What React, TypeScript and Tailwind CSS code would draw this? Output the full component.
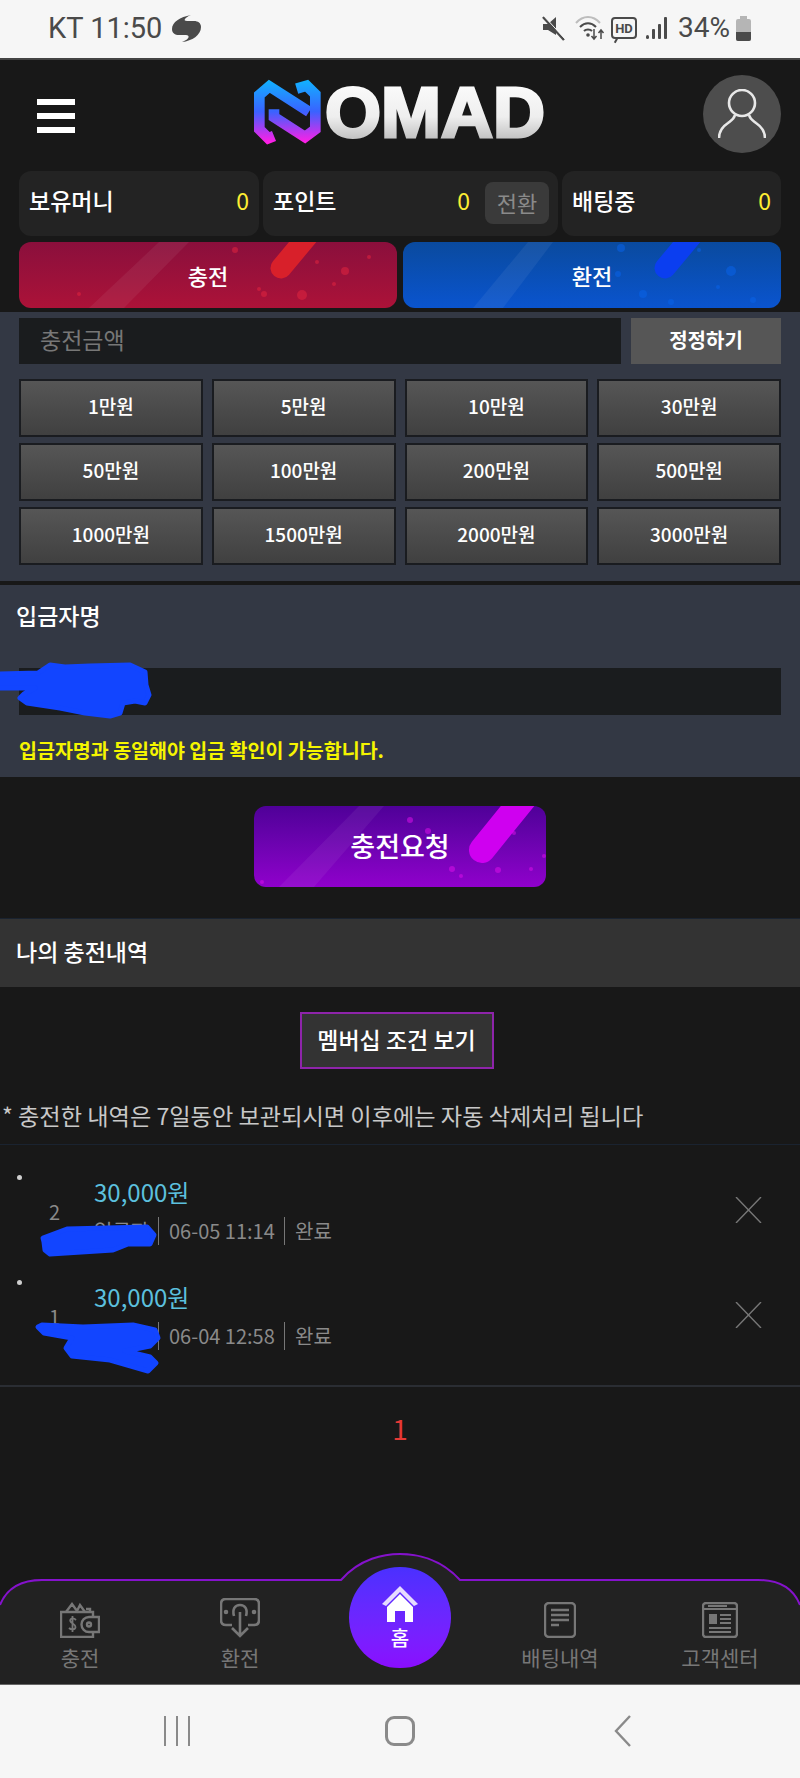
import React from "react";

const AMOUNTS = [
  "1만원", "5만원", "10만원", "30만원",
  "50만원", "100만원", "200만원", "500만원",
  "1000만원", "1500만원", "2000만원", "3000만원",
];

type Dot = [number, number, number];

const Sparkle = ({
  w,
  h,
  band,
  streak,
  streakWidth,
  streakColor,
  dotColor,
  dots,
}: {
  w: number;
  h: number;
  band: string;
  streak: string;
  streakWidth: number;
  streakColor: string;
  dotColor: string;
  dots: Dot[];
}) => (
  <svg className="absolute inset-0" width={w} height={h} viewBox={`0 0 ${w} ${h}`}>
    <path d={band} fill="#ffffff" fillOpacity={0.06} />
    <path d={streak} stroke={streakColor} strokeWidth={streakWidth} strokeLinecap="round" />
    {dots.map(([x, y, r], i) => (
      <circle key={i} cx={x} cy={y} r={r} fill={dotColor} fillOpacity={0.55} />
    ))}
  </svg>
);

const redDots: Dot[] = [[216, 8, 3], [298, 20, 2], [326, 29, 4], [245, 52, 3], [283, 53, 5], [240, 47, 2], [315, 42, 2], [350, 15, 2], [60, 52, 2]];
const blueDots: Dot[] = [[218, 6, 4], [296, 8, 2], [328, 29, 5], [215, 32, 3], [240, 52, 4], [268, 60, 3], [315, 45, 2], [350, 58, 3]];
const purpleDots: Dot[] = [[156, 14, 3], [174, 25, 3], [260, 27, 2], [290, 50, 2], [198, 63, 3], [207, 70, 2], [244, 64, 3], [277, 63, 2], [8, 76, 2]];

const StatCard = ({ label, className, children }: { label: string; className: string; children?: React.ReactNode }) => (
  <div className={`flex h-[65px] items-center rounded-xl bg-[#232323] pb-[6px] ${className}`}>
    <span className="text-[23px] font-medium text-white">{label}</span>
    {children}
  </div>
);

const Scribble = ({ className, viewBox, width, height, d }: { className: string; viewBox: string; width: number; height: number; d: string }) => (
  <svg className={`absolute ${className}`} width={width} height={height} viewBox={viewBox}>
    <path d={d} fill="#1245ff" stroke="#1245ff" strokeWidth={5} strokeLinejoin="round" />
  </svg>
);

const HistoryRow = ({
  no,
  date,
  scribble,
}: {
  no: number;
  date: string;
  scribble: React.ReactNode;
}) => (
  <li className="relative flex h-[105px] items-start">
    <span className="ml-[17px] mt-[5px] h-[5px] w-[5px] rounded-full bg-[#cfcfcf]" />
    <span className="ml-[27px] mt-[28px] w-[45px] text-[20px] leading-[28px] text-[#8a8a8a]">{no}</span>
    <div className="flex flex-col">
      <span className="mt-[5px] text-[24px] leading-[34px] text-[#5cc0de]">30,000원</span>
      <div className="mt-[8px] flex h-[28px] items-center text-[20px] text-[#8a8a8a]">
        <span className="w-[64px]">입금자</span>
        <span className="h-[28px] w-px bg-[#777]" />
        <span className="ml-[10px] w-[115px] whitespace-nowrap">{date}</span>
        <span className="h-[28px] w-px bg-[#777]" />
        <span className="ml-[10px]">완료</span>
      </div>
    </div>
    <svg className="absolute left-[735px] top-[27px]" width={27} height={26} viewBox="0 0 27 26">
      <path d="M1 0 26 26M26 0 1 26" stroke="#777" strokeWidth={1.4} />
    </svg>
    {scribble}
  </li>
);

const Logo = () => (
  <svg width={294} height={84} viewBox="0 -10 294 84">
    <defs>
      <linearGradient id="logoN" gradientUnits="userSpaceOnUse" x1="0" y1="0" x2="0" y2="184">
        <stop offset="0" stopColor="#12b0ff" />
        <stop offset="0.5" stopColor="#3a62ff" />
        <stop offset="1" stopColor="#ff1fe6" />
      </linearGradient>
      <linearGradient id="logoText" x1="0" y1="0" x2="0" y2="1">
        <stop offset="0" stopColor="#ffffff" />
        <stop offset="0.55" stopColor="#eeeeee" />
        <stop offset="1" stopColor="#a8a8a8" />
      </linearGradient>
    </defs>
    <g transform="scale(0.3333)">
      <g fill="none" stroke="url(#logoN)" strokeWidth={32} strokeLinejoin="miter">
        <path d="M60 165 43 172 16 145V42L46 16 165 92" />
        <path d="M128 23 158 14 184 40V145L153 168 60 108V85" />
      </g>
    </g>
    <text
      x={71}
      y={56}
      textLength={220}
      lengthAdjust="spacingAndGlyphs"
      fontFamily="'Liberation Sans', sans-serif"
      fontWeight={700}
      fontSize={70}
      fill="url(#logoText)"
      stroke="url(#logoText)"
      strokeWidth={3}
    >
      OMAD
    </text>
  </svg>
);

const WalletIcon = () => (
  <svg width={40} height={36} viewBox="0 0 40 36" fill="none" stroke="#777" strokeWidth={2.4}>
    <path d="M1 10H33V35H1Z" />
    <path d="M6 10 12 2 17 9 20 3 25 10M30 10V7H26" />
    <path d="M29 15H39V30H29A7 7 0 0 1 29 15Z" fill="#222" />
    <circle cx={29} cy={22.5} r={2} />
    <path d="M16 18C13 15 9 17 10.500 19.500C12 22 15.500 22 15.500 25C15.500 28 11 28 9 26M12.500 14V30" strokeWidth={1.8} />
  </svg>
);

const ExchangeIcon = () => (
  <svg width={40} height={40} viewBox="0 0 40 40" fill="none" stroke="#777" strokeWidth={2.6}>
    <path d="M12 27H6Q1 27 1 22V6Q1 1 6 1H34Q39 1 39 6V22Q39 27 34 27H28" />
    <path d="M14 18C12 11 15 7 20 7C25 7 28 11 26 18" />
    <path d="M20 14V37M12 30 20 38 28 30" />
    <circle cx={6} cy={14} r={1} fill="#777" />
    <circle cx={34} cy={14} r={1} fill="#777" />
  </svg>
);

const DocIcon = () => (
  <svg width={32} height={36} viewBox="0 0 32 36" fill="none" stroke="#777" strokeWidth={2.4}>
    <rect x={1} y={1} width={30} height={34} rx={4} />
    <path d="M7 8H25M7 13H25M7 18H25M7 23H15" />
  </svg>
);

const NewsIcon = () => (
  <svg width={36} height={36} viewBox="0 0 36 36" fill="none" stroke="#777" strokeWidth={2.4}>
    <rect x={1} y={1} width={34} height={34} rx={3} />
    <path d="M1 7H35M6 4H25" strokeWidth={1.8} />
    <rect x={7} y={12} width={8} height={10} fill="#777" stroke="none" />
    <path d="M18 13H29M18 17H29M18 21H29M7 26H29M7 30H29" strokeWidth={1.8} />
  </svg>
);

const HomeIcon = () => (
  <svg width={38} height={38} viewBox="0 0 38 38">
    <path d="M1 19 19 1 37 19 33 21 19 7 5 21Z" fill="#e6dcff" />
    <path d="M6 22 19 9 32 22V37H24V26H14V37H6Z" fill="#ffffff" />
  </svg>
);

const StatusIcons = () => (
  <div className="flex items-center">
    <svg className="mr-[9px]" width={24} height={26} viewBox="0 0 24 26">
      <path d="M1 9H6L14 2V20L6 15H1Z" fill="#4a4a4a" />
      <path d="M1 2 22 25" stroke="#4a4a4a" strokeWidth={2.5} />
      <path d="M1 0 24 25" stroke="#f6f6f6" strokeWidth={1} />
    </svg>
    <svg className="mr-[5px]" width={31} height={26} viewBox="0 0 31 26" fill="none">
      <path d="M1 8C8 0 18 0 25 8" stroke="#bdbdbd" strokeWidth={2} />
      <path d="M5 12C10 7 16 7 21 12M9 16C11 14 15 14 17 16" stroke="#4a4a4a" strokeWidth={2} />
      <circle cx={13} cy={20} r={1.800} fill="#4a4a4a" />
      <path d="M19 14V24M16.500 21 19 24 21.500 21" stroke="#4a4a4a" strokeWidth={1.5} />
      <path d="M26 24V15M23.500 18 26 15 28.500 18" stroke="#4a4a4a" strokeWidth={1.5} />
    </svg>
    <div className="relative mr-[9px] flex h-[22px] w-[26px] items-center justify-center rounded-[4px] border-2 border-[#4a4a4a] text-[13px] font-bold leading-none text-[#4a4a4a]">
      HD
      <span className="absolute bottom-[-6px] left-[2px] h-[5px] w-[2px] rotate-[30deg] bg-[#4a4a4a]" />
    </div>
    <svg className="mr-[11px]" width={21} height={24} viewBox="0 0 21 24" fill="#4a4a4a">
      <rect x={0} y={19} width={3} height={4} rx={1.500} />
      <rect x={6} y={13} width={3} height={10} rx={1} />
      <rect x={12} y={8} width={3} height={15} rx={1} />
      <rect x={18} y={1} width={3} height={22} rx={1} />
    </svg>
    <span className="mr-[6px] text-[28px] leading-none text-[#4a4a4a]">34%</span>
    <svg width={15} height={25} viewBox="0 0 15 25">
      <path d="M4 0H11V3H13Q15 3 15 5V23Q15 25 13 25H2Q0 25 0 23V5Q0 3 2 3H4Z" fill="#b5b5b5" />
      <path d="M0 16H15V23Q15 25 13 25H2Q0 25 0 23Z" fill="#4a4a4a" />
    </svg>
  </div>
);

export default function App() {
  return (
    <div className="flex h-[1778px] w-[800px] flex-col overflow-hidden bg-[#181818] font-['Noto_Sans_CJK_KR','Noto_Sans',sans-serif]">
      {/* Status bar */}
      <div className="flex h-[60px] items-center justify-between border-b-2 border-[#444] bg-[#f6f6f6] pb-[2px] pl-[48px] pr-[49px] font-['Roboto',sans-serif]">
        <div className="flex items-center">
          <span className="text-[29px] leading-none text-[#4a4a4a]">KT 11:50</span>
          <svg className="ml-[10px]" width={29} height={27} viewBox="0 0 29 27">
            <path d="M19 0C8 2 0 7 0 14C0 18 3 20 7 20H14C18 20 18 24 10 27C20 26 29 20 29 12C29 8 26 6 22 6H15C11 6 12 3 19 0Z" fill="#4a4a4a" />
          </svg>
        </div>
        <StatusIcons />
      </div>

      {/* Header */}
      <header className="flex h-[111px] items-center justify-between pl-[37px] pr-[19px]">
        <div className="flex w-[38px] flex-col gap-[8px]">
          <span className="h-[6px] bg-white" />
          <span className="h-[6px] bg-white" />
          <span className="h-[6px] bg-white" />
        </div>
        <div className="ml-[24px] mt-[-5px]">
          <Logo />
        </div>
        <div className="mt-[-4px] flex h-[78px] w-[78px] items-center justify-center rounded-full bg-[#4d4d4d]">
          <svg width={48} height={50} viewBox="0 0 48 50" fill="none" stroke="#e8e8e8" strokeWidth={2.6}>
            <ellipse cx={24} cy={14} rx={13} ry={13} />
            <path d="M17 26C16 30 14 31 10 34C4 38 1 42 1 49M31 26C32 30 34 31 38 34C44 38 47 42 47 49" />
          </svg>
        </div>
      </header>

      {/* Balances */}
      <div className="flex gap-[4px] px-[19px]">
        <StatCard label="보유머니" className="w-[240px] justify-between pl-[10px] pr-[10px]">
          <span className="text-[23px] text-[#ffee33]">0</span>
        </StatCard>
        <StatCard label="포인트" className="w-[295px] pl-[10px] pr-[9px]">
          <span className="ml-auto text-[23px] text-[#ffee33]">0</span>
          <span className="ml-[15px] mt-[4px] flex h-[42px] w-[64px] items-center justify-center rounded-lg bg-[#3a3a3a] text-[22px] text-[#8a8a8a]">전환</span>
        </StatCard>
        <StatCard label="배팅중" className="w-[219px] justify-between pl-[10px] pr-[10px]">
          <span className="text-[23px] text-[#ffee33]">0</span>
        </StatCard>
      </div>

      {/* Deposit / withdraw */}
      <div className="mt-[6px] flex gap-[6px] px-[19px]">
        <button className="relative h-[66px] w-[378px] overflow-hidden rounded-xl bg-gradient-to-b from-[#8a0f3c] to-[#ac1238]">
          <Sparkle
            w={378}
            h={66}
            band="M170 0H140L70 66H105Z"
            streak="M292 -10 262 26"
            streakWidth={21}
            streakColor="#d8202a"
            dotColor="#e02440"
            dots={redDots}
          />
          <span className="relative text-[22px] font-medium text-white">충전</span>
        </button>
        <button className="relative h-[66px] w-[378px] overflow-hidden rounded-xl bg-gradient-to-b from-[#0a4a9e] to-[#0a54cf]">
          <Sparkle
            w={378}
            h={66}
            band="M150 0H125L70 66H100Z"
            streak="M292 -10 262 26"
            streakWidth={21}
            streakColor="#0b3ef0"
            dotColor="#0a62e8"
            dots={blueDots}
          />
          <span className="relative text-[22px] font-medium text-white">환전</span>
        </button>
      </div>

      {/* Amount */}
      <section className="mt-[4px] h-[269px] bg-[#333844] px-[19px] pt-[6px]">
        <div className="flex gap-[10px]">
          <input
            readOnly
            placeholder="충전금액"
            className="h-[46px] w-[602px] bg-[#1a1c1e] pb-[4px] pl-[21px] text-[23px] placeholder:text-[#777]"
          />
          <button className="h-[46px] w-[150px] bg-[#565656] pb-[2px] text-[20px] font-bold text-white">정정하기</button>
        </div>
        <div className="mt-[15px] grid grid-cols-4 gap-x-[9px] gap-y-[6px]">
          {AMOUNTS.map((a) => (
            <button
              key={a}
              className="h-[58px] border-2 border-[#1a1c20] bg-gradient-to-b from-[#565656] to-[#404040] pb-[4px] text-[19px] font-medium text-white"
            >
              {a}
            </button>
          ))}
        </div>
      </section>

      {/* Depositor */}
      <section className="mt-[4px] h-[192px] bg-[#333844]">
        <h2 className="pl-[16px] pt-[14px] text-[23px] font-medium leading-[32px] text-white">입금자명</h2>
        <div className="relative mx-[19px] mt-[37px] h-[47px] bg-[#1a1c1e]">
          <Scribble
            className="left-[-19px] top-[-6px]"
            width={156}
            height={59}
            viewBox="0 662 156 59"
            d="M-3 674 38 673 50 665 65 667 90 666 130 665 145 672 146 685 149 695 145 703 135 701 123 703 120 713 110 716 85 713 60 708 27 703 20 698 24 694 35 688 -3 688Z"
          />
        </div>
        <p className="ml-[19px] mt-[21px] whitespace-nowrap text-[19.5px] font-bold leading-[28px] text-[#f5f500]">입금자명과 동일해야 입금 확인이 가능합니다.</p>
      </section>

      {/* Submit */}
      <div className="flex justify-center pt-[29px]">
        <button className="relative h-[81px] w-[292px] overflow-hidden rounded-xl bg-gradient-to-b from-[#4f0098] to-[#9000cc]">
          <Sparkle
            w={292}
            h={81}
            band="M130 0H105L25 81H60Z"
            streak="M270 -8 228 44"
            streakWidth={26}
            streakColor="#cf00f0"
            dotColor="#d810e8"
            dots={purpleDots}
          />
          <span className="relative text-[27px] font-medium text-white">충전요청</span>
        </button>
      </div>

      {/* History */}
      <h2 className="mt-[31px] flex h-[69px] items-center border-t border-[#1a2330] bg-[#333] pb-[3px] pl-[16px] text-[23px] font-medium text-white">나의 충전내역</h2>
      <div className="flex justify-center pr-[7px] pt-[25px]">
        <button className="h-[57px] w-[194px] border-2 border-[#8e24aa] bg-[#333] pb-[2px] text-[23px] font-medium text-white">멤버십 조건 보기</button>
      </div>
      <p className="ml-[2px] mt-[26px] h-[49px] whitespace-nowrap text-[23.2px] leading-[40px] text-[#c8c8c8]">* 충전한 내역은 7일동안 보관되시면 이후에는 자동 삭제처리 됩니다</p>
      <ul className="border-t border-[#1a2330] pb-[5px] pt-[25px]">
        <HistoryRow
          no={2}
          date="06-05 11:14"
          scribble={
            <Scribble
              className="left-[36px] top-[50px]"
              width={128}
              height={40}
              viewBox="36 1220 128 40"
              d="M43 1238 67 1229 147 1227 154 1235 150 1244 128 1244 113 1250 50 1254 45 1250 44 1242Z"
            />
          }
        />
        <HistoryRow
          no={1}
          date="06-04 12:58"
          scribble={
            <Scribble
              className="left-[30px] top-[43px]"
              width={135}
              height={60}
              viewBox="30 1318 135 60"
              d="M38 1327 42 1325 83 1327 133 1325 155 1330 158 1338 150 1346 125 1351 150 1357 156 1363 148 1371 110 1360 72 1356 66 1348 72 1338 44 1333Z"
            />
          }
        />
      </ul>
      <div className="flex h-[79px] items-center justify-center border-t-2 border-[#2a2d33] pt-[4px] text-[28px] text-[#e53935]">1</div>

      {/* Bottom nav */}
      <nav className="relative mt-auto grid h-[131px] grid-cols-5">
        <svg className="absolute inset-0" width={800} height={131} viewBox="0 0 800 131">
          <path
            d="M0 52Q10 27 42 27H341C360 5 385 1 400 1C415 1 440 5 460 27H758Q790 27 800 52V131H0Z"
            fill="#222222"
          />
          <path
            d="M0 52Q10 27 42 27H341C360 5 385 1 400 1C415 1 440 5 460 27H758Q790 27 800 52"
            fill="none"
            stroke="#8512cc"
            strokeWidth={2}
          />
        </svg>
        {[
          { label: "충전", icon: <WalletIcon /> },
          { label: "환전", icon: <ExchangeIcon /> },
        ].map((item) => (
          <div key={item.label} className="relative flex flex-col items-center pt-[49px]">
            <div className="flex h-[36px] items-end">{item.icon}</div>
            <span className="mt-[4px] text-[21px] leading-[30px] text-[#777]">{item.label}</span>
          </div>
        ))}
        <div className="relative flex flex-col items-center pt-[14px]">
          <div className="flex h-[101px] w-[102px] flex-col items-center rounded-full bg-gradient-to-b from-[#4a30ff] to-[#8a0cff] pt-[18px]">
            <HomeIcon />
            <span className="mt-[1px] text-[20px] font-medium leading-[28px] text-white">홈</span>
          </div>
        </div>
        {[
          { label: "배팅내역", icon: <DocIcon /> },
          { label: "고객센터", icon: <NewsIcon /> },
        ].map((item) => (
          <div key={item.label} className="relative flex flex-col items-center pt-[49px]">
            <div className="flex h-[36px] items-end">{item.icon}</div>
            <span className="mt-[4px] text-[21px] leading-[30px] text-[#777]">{item.label}</span>
          </div>
        ))}
      </nav>

      {/* Android nav */}
      <div className="grid h-[94px] grid-cols-3 border-t border-[#666] bg-[#f6f6f6] px-[65px]">
        <div className="flex items-center justify-center gap-[10px] pb-[1px]">
          <span className="h-[30px] w-[2px] bg-[#8a8a8a]" />
          <span className="h-[30px] w-[2px] bg-[#8a8a8a]" />
          <span className="h-[30px] w-[2px] bg-[#8a8a8a]" />
        </div>
        <div className="flex items-center justify-center pb-[1px]">
          <span className="h-[30px] w-[30px] rounded-[9px] border-[3px] border-[#8a8a8a]" />
        </div>
        <div className="flex items-center justify-center pb-[1px]">
          <svg width={18} height={32} viewBox="0 0 18 32" fill="none" stroke="#8a8a8a" strokeWidth={2.4}>
            <path d="M16 1 2 16 16 31" />
          </svg>
        </div>
      </div>
    </div>
  );
}
